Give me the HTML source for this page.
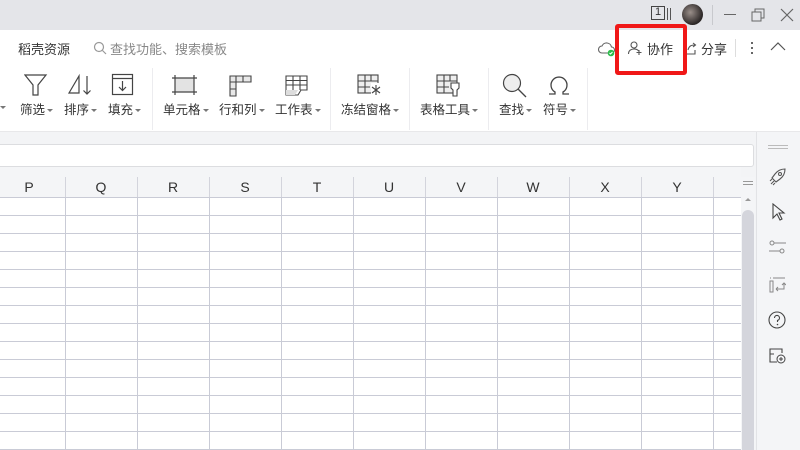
<!DOCTYPE html>
<html><head><meta charset="utf-8"><style>
*{margin:0;padding:0;box-sizing:border-box}
body{width:800px;height:450px;overflow:hidden;background:#f3f4f6;font-family:"Liberation Sans","Noto Sans CJK SC",sans-serif;position:relative;color:#333}
.abs{position:absolute}
.t{font-size:13px;color:#333;white-space:nowrap}
.tb{font-size:12.5px;color:#333;white-space:nowrap}
.arr{display:inline-block;width:0;height:0;border-left:3px solid transparent;border-right:3px solid transparent;border-top:3px solid #777;vertical-align:middle;margin-left:2px}
.sep{position:absolute;top:68px;width:1px;height:62px;background:#ececef}
.col{position:absolute;top:177px;height:20px;font-size:14px;text-align:center;line-height:20px;color:#333}
</style></head><body>
<div class="abs" style="left:0;top:0;width:800px;height:30px;background:#e4e5e9"></div>
<div class="abs" style="left:651px;top:6px;width:14px;height:14px;border:1.5px solid #444;font-size:11px;line-height:11px;text-align:center">1</div>
<div class="abs" style="left:667px;top:8px;width:1px;height:12px;background:#555"></div>
<div class="abs" style="left:670px;top:8px;width:1px;height:12px;background:#555"></div>
<div class="abs" style="left:682px;top:4px;width:21px;height:21px;border-radius:50%;background:radial-gradient(circle at 40% 40%,#9a8f8a,#2a2525 70%)"></div>
<div class="abs" style="left:712px;top:5px;width:1px;height:20px;background:#c8c9cd"></div>
<div class="abs" style="left:724px;top:14px;width:12px;height:1px;background:#666"></div>
<svg class="abs" style="left:750px;top:7px" width="16" height="16"><rect x="2" y="5" width="9" height="9" fill="none" stroke="#666"/><path d="M5 5V2h9v9h-3" fill="none" stroke="#666"/></svg>
<svg class="abs" style="left:780px;top:8px" width="14" height="14"><path d="M1 1L13 13M13 1L1 13" stroke="#666" stroke-width="1.2"/></svg>
<div class="abs" style="left:0;top:30px;width:800px;height:102px;background:#fff;border-bottom:1px solid #e8e8ea"></div>
<div class="abs t" style="left:18px;top:39px">稻壳资源</div>
<svg class="abs" style="left:93px;top:41px" width="14" height="14"><circle cx="6" cy="6" r="4.5" fill="none" stroke="#999" stroke-width="1.2"/><path d="M9.5 9.5L13 13" stroke="#999" stroke-width="1.2"/></svg>
<div class="abs t" style="left:110px;top:39px;color:#888">查找功能、搜索模板</div>
<svg class="abs" style="left:598px;top:41px" width="18" height="16"><path d="M4 12a3.5 3.5 0 0 1 0-7a5 5 0 0 1 9.5 1a3 3 0 0 1 0 6z" fill="none" stroke="#666" stroke-width="1.1"/><circle cx="13" cy="12" r="3.3" fill="#2dbb4c"/><path d="M11.5 12l1 1 2-2" stroke="#fff" fill="none"/></svg>
<svg class="abs" style="left:627px;top:40px" width="16" height="16"><circle cx="7" cy="5" r="3" fill="none" stroke="#555" stroke-width="1.1"/><path d="M1.5 14c0-3.5 2.5-5 5.5-5s4 1 4.5 2" fill="none" stroke="#555" stroke-width="1.1"/><path d="M12 10v5M9.5 12.5h5" stroke="#555" stroke-width="1.1"/></svg>
<div class="abs t" style="left:647px;top:39px">协作</div>
<svg class="abs" style="left:683px;top:41px" width="14" height="14"><path d="M3 5v8h9v-4" fill="none" stroke="#555" stroke-width="1.1"/><path d="M5 9c1-4 3-5 7-5M10 2l2.5 2L10 6" fill="none" stroke="#555" stroke-width="1.1"/></svg>
<div class="abs t" style="left:701px;top:39px">分享</div>
<div class="abs" style="left:735px;top:39px;width:1px;height:18px;background:#ddd"></div>
<div class="abs" style="left:751px;top:42px;width:2px;height:2px;background:#666;box-shadow:0 5px 0 #666,0 10px 0 #666"></div>
<svg class="abs" style="left:770px;top:42px" width="16" height="10"><path d="M1 8L8 1l7 7" fill="none" stroke="#555" stroke-width="1.2"/></svg>
<div class="abs" style="left:615px;top:24px;width:72px;height:51px;border:4px solid #f01818;border-radius:3px"></div>
<div class="abs" style="left:0;top:99px;width:6px;height:6px"><span class="arr" style="margin:0"></span></div>
<svg class="abs" style="left:24px;top:73px" width="24" height="24"><path d="M1 2h21l-8 10v10h-5V12z" fill="none" stroke="#444" stroke-width="1.2"/></svg>
<svg class="abs" style="left:66px;top:73px" width="28" height="24"><path d="M3 20L13 3v17z" fill="none" stroke="#444" stroke-width="1.2"/><path d="M21 3v18M17.5 17.5L21 21l3.5-3.5" fill="none" stroke="#444" stroke-width="1.2"/></svg>
<svg class="abs" style="left:111px;top:73px" width="24" height="24"><rect x="1.5" y="1.5" width="20" height="20" fill="none" stroke="#444" stroke-width="1.2"/><path d="M1.5 5.5h20M11.5 8v9M8 14l3.5 3.5L15 14" fill="none" stroke="#444" stroke-width="1.2"/></svg>
<svg class="abs" style="left:172px;top:74px" width="26" height="22"><rect x="3" y="4" width="19" height="14" fill="#e3e3e3"/><path d="M0 4h25M0 18h25M3 1v20M22 1v20" stroke="#444" stroke-width="1.2"/></svg>
<svg class="abs" style="left:229px;top:75px" width="24" height="22"><path d="M1 1h21v6H7v14H1z" fill="#e8e8e8" stroke="#444" stroke-width="1.1"/><path d="M7 1v6M14 1v6M1 7h6M1 14h6" stroke="#444" stroke-width="1.1"/></svg>
<svg class="abs" style="left:285px;top:75px" width="24" height="22"><path d="M1 1h21v14h-6l-3 5H1z" fill="none" stroke="#444" stroke-width="1.1"/><path d="M1 5.5h21M1 10h21M8 1v14M15 1v14" stroke="#444" stroke-width="1.1"/><path d="M1 15h12l-3 5H1z" fill="#ddd"/></svg>
<svg class="abs" style="left:357px;top:74px" width="26" height="24"><rect x="1" y="1" width="20" height="18" fill="#eee" stroke="#444" stroke-width="1.1"/><path d="M1 7h20M1 13h12M8 1v18M14 1v6" stroke="#444" stroke-width="1.1"/><rect x="14" y="9" width="10" height="12" fill="#fff"/><path d="M19 11v10M15 13l8 6M23 13l-8 6" stroke="#444" stroke-width="1.1"/></svg>
<svg class="abs" style="left:436px;top:74px" width="26" height="24"><rect x="1" y="1" width="20" height="18" fill="#eee" stroke="#444" stroke-width="1.1"/><path d="M1 7h20M1 13h12M8 1v18M14 1v6" stroke="#444" stroke-width="1.1"/><path d="M15 9h8v5l-2 2v6h-4v-6l-2-2z" fill="#fff" stroke="#444" stroke-width="1.1"/></svg>
<svg class="abs" style="left:502px;top:73px" width="26" height="26"><circle cx="10" cy="10" r="8.5" fill="#eee" stroke="#444" stroke-width="1.2"/><path d="M16 16l8 8" stroke="#444" stroke-width="1.3"/></svg>
<svg class="abs" style="left:547px;top:73px" width="24" height="24"><path d="M2 21h6v-2a8 8 0 1 1 8 0v2h6" fill="none" stroke="#444" stroke-width="1.3"/></svg>
<div class="abs tb" style="left:20px;top:99px">筛选<span class="arr"></span></div>
<div class="abs tb" style="left:64px;top:99px">排序<span class="arr"></span></div>
<div class="abs tb" style="left:108px;top:99px">填充<span class="arr"></span></div>
<div class="abs tb" style="left:163px;top:99px">单元格<span class="arr"></span></div>
<div class="abs tb" style="left:219px;top:99px">行和列<span class="arr"></span></div>
<div class="abs tb" style="left:275px;top:99px">工作表<span class="arr"></span></div>
<div class="abs tb" style="left:341px;top:99px">冻结窗格<span class="arr"></span></div>
<div class="abs tb" style="left:420px;top:99px">表格工具<span class="arr"></span></div>
<div class="abs tb" style="left:499px;top:99px">查找<span class="arr"></span></div>
<div class="abs tb" style="left:543px;top:99px">符号<span class="arr"></span></div>
<div class="sep" style="left:152px"></div><div class="sep" style="left:330px"></div><div class="sep" style="left:409px"></div><div class="sep" style="left:488px"></div><div class="sep" style="left:587px"></div>
<div class="abs" style="left:-5px;top:144px;width:759px;height:23px;background:#fff;border:1px solid #dcdde0;border-radius:3px"></div>
<div class="abs" style="left:0;top:167px;width:741px;height:30px;background:#f4f5f7"></div>
<div class="abs" style="left:0;top:197px;width:741px;height:253px;background-color:#fff;background-image:linear-gradient(#c9cbd6 1px,transparent 1px);background-size:741px 18px"></div>
<div class="abs" style="left:0;top:197px;width:741px;height:253px;background-image:linear-gradient(90deg,#c9cbd6 1px,transparent 1px);background-size:72px 253px;background-position:65px 0"></div>
<div class="abs" style="left:0;top:177px;width:741px;height:20px;background-image:linear-gradient(90deg,#d3d4dc 1px,transparent 1px);background-size:72px 20px;background-position:65px 0"></div>
<div class="col" style="left:-7px;width:72px">P</div>
<div class="col" style="left:65px;width:72px">Q</div>
<div class="col" style="left:137px;width:72px">R</div>
<div class="col" style="left:209px;width:72px">S</div>
<div class="col" style="left:281px;width:72px">T</div>
<div class="col" style="left:353px;width:72px">U</div>
<div class="col" style="left:425px;width:72px">V</div>
<div class="col" style="left:497px;width:72px">W</div>
<div class="col" style="left:569px;width:72px">X</div>
<div class="col" style="left:641px;width:72px">Y</div>
<div class="abs" style="left:741px;top:177px;width:14px;height:273px;background:#f4f5f7"></div>
<div class="abs" style="left:743px;top:181px;width:10px;height:1px;background:#999;box-shadow:0 3px 0 #999"></div>
<div class="abs" style="left:745px;top:198px;border-left:3px solid transparent;border-right:3px solid transparent;border-bottom:3px solid #999"></div>
<div class="abs" style="left:742px;top:210px;width:12px;height:240px;background:#d4d5dc;border-radius:6px 6px 0 0"></div>
<div class="abs" style="left:756px;top:132px;width:44px;height:318px;background:#f4f5f7;border-left:1px solid #e2e3e6"></div>
<div class="abs" style="left:768px;top:145px;width:20px;height:1px;background:#bbb;box-shadow:0 3px 0 #bbb"></div>
<svg class="abs" style="left:768px;top:168px" width="18" height="18"><path d="M6 12l-2-2 3-4c3-4 7-5 10-5-0 3-1 7-5 10l-4 3z" fill="none" stroke="#555" stroke-width="1.1"/><circle cx="12" cy="6" r="1.5" fill="none" stroke="#555"/><path d="M2 13l2-2M3 16l3-3M5 17l2-2" stroke="#555"/></svg>
<svg class="abs" style="left:771px;top:203px" width="16" height="18"><path d="M2 1v14l4-4 3 6 2-1-3-6h5z" fill="none" stroke="#444" stroke-width="1.1"/></svg>
<svg class="abs" style="left:768px;top:239px" width="20" height="16"><circle cx="4" cy="4" r="2" fill="none" stroke="#888"/><path d="M6 4h12M1 12h11" stroke="#888"/><circle cx="14" cy="12" r="2" fill="none" stroke="#888"/></svg>
<svg class="abs" style="left:768px;top:276px" width="18" height="18"><path d="M5 2h12M2 2h1M2 5v11h3V5z" fill="none" stroke="#888"/><path d="M8 13h8v-6M14 9l2-2 2 2M8 13l2-2M8 13l2 2" fill="none" stroke="#888"/></svg>
<svg class="abs" style="left:768px;top:311px" width="18" height="18"><circle cx="9" cy="9" r="8" fill="none" stroke="#444" stroke-width="1.1"/><path d="M6.5 7a2.5 2.5 0 1 1 3 2.4V11" fill="none" stroke="#444" stroke-width="1.1"/><circle cx="9.5" cy="13.5" r=".8" fill="#444"/></svg>
<svg class="abs" style="left:768px;top:346px" width="18" height="18"><path d="M2 8V3h12v4M2 8v8h7M2 8h4" fill="none" stroke="#444" stroke-width="1.1"/><circle cx="13" cy="13" r="4" fill="none" stroke="#444"/><path d="M11 13h4M13 11v4" stroke="#444"/></svg>
</body></html>
